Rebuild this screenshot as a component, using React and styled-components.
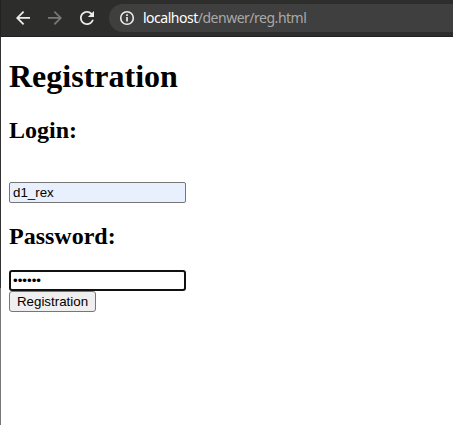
import React from "react";
import styled, { createGlobalStyle } from "styled-components";

const GlobalStyle = createGlobalStyle`
  * { box-sizing: border-box; }
  html, body { margin: 0; height: 100%; overflow: hidden; background: #fff; }
`;

const Window = styled.div`
  display: flex;
  flex-direction: column;
  width: 453px;
  height: 425px;
  overflow: hidden;
`;

const Toolbar = styled.header`
  display: flex;
  align-items: center;
  flex: none;
  height: 37px;
  padding-left: 15px;
  background: #2d2d2b;
  border-bottom: 1px solid #202124;
  border-left: 1px solid #222;
`;

const NavButton = styled.button`
  display: flex;
  width: 16px;
  height: 16px;
  margin-right: 16px;
  padding: 0;
  border: 0;
  background: none;
  color: ${(p) => (p.disabled ? "#797978" : "#efede7")};
`;

const AddressBar = styled.div`
  display: flex;
  align-items: center;
  flex: 1;
  height: 28px;
  margin-left: -3px;
  padding-left: 10px;
  border-radius: 14px 0 0 14px;
  background: #3f3f3f;
  color: #efede7;
`;

const Url = styled.span`
  margin-left: 8px;
  font: 14px/20px "Noto Sans", "Open Sans", sans-serif;
  letter-spacing: -0.49px;
  color: #aaa9a7;
  white-space: nowrap;
`;

const Host = styled.span`
  color: #fff;
`;

const Page = styled.main`
  flex: 1;
  padding-left: 8px;
  border-left: 1px solid;
  border-image: linear-gradient(#333 251px, #777 251px) 1;
  font-family: "Liberation Serif", "Times New Roman", serif;
  color: #000;
`;

const Title = styled.h1`
  margin: 21px 0 0;
  font-size: 32px;
  line-height: 37px;
`;

const Label = styled.h2`
  margin: ${(p) => p.$top}px 0 ${(p) => p.$bottom}px;
  font-size: 24px;
  line-height: 27px;
`;

const Field = styled.input`
  display: block;
  width: 177px;
  height: 21px;
  margin: 0;
  padding: 1px 3px;
  border: 1px solid #767676;
  border-radius: 2px;
  outline: none;
  background: ${(p) => (p.$filled ? "#e8f0fe" : "#fff")};
  color: #000;
  font: 13.333px "Liberation Sans", Arial, sans-serif;
`;

const FocusedField = styled(Field)`
  padding: 1px 2px;
  border: 2px solid #101010;
  border-radius: 3px;
`;

const Submit = styled.button`
  display: block;
  width: 87px;
  height: 21px;
  padding: 0;
  border: 1px solid #767676;
  border-radius: 3px;
  background: #efefef;
  color: #000;
  font: 13.333px "Liberation Sans", Arial, sans-serif;
`;

const NavIcon = ({ d }) => (
  <svg width="16" height="16" viewBox="4 2.86 18.29 18.29" fill="currentColor">
    <path d={d} />
  </svg>
);

const InfoIcon = () => (
  <svg width="16" height="16" viewBox="0 0 16 16" fill="none" stroke="currentColor">
    <circle cx="8" cy="8" r="6.3" strokeWidth="1.6" />
    <path d="M8 7v4.5M8 4.3V6" strokeWidth="1.7" />
  </svg>
);

const ICONS = {
  back: "M20 11H7.83l5.59-5.59L12 4l-8 8 8 8 1.41-1.41L7.83 13H20v-2z",
  forward: "M12 4l-1.41 1.41L16.17 11H4v2h12.17l-5.58 5.59L12 20l8-8z",
  reload:
    "M17.65 6.35C16.2 4.9 14.21 4 12 4c-4.42 0-7.99 3.58-7.99 8s3.57 8 7.99 8c3.73 0 6.84-2.55 7.73-6h-2.08c-.82 2.33-3.04 4-5.65 4-3.31 0-6-2.69-6-6s2.69-6 6-6c1.66 0 3.14.69 4.22 1.78L13 11h7V4l-2.35 2.35z",
};

export default function App() {
  return (
    <Window>
      <GlobalStyle />
      <Toolbar>
        <NavButton aria-label="Back">
          <NavIcon d={ICONS.back} />
        </NavButton>
        <NavButton aria-label="Forward" disabled>
          <NavIcon d={ICONS.forward} />
        </NavButton>
        <NavButton aria-label="Reload">
          <NavIcon d={ICONS.reload} />
        </NavButton>
        <AddressBar>
          <InfoIcon />
          <Url>
            <Host>localhost</Host>/denwer/reg.html
          </Url>
        </AddressBar>
      </Toolbar>
      <Page>
        <Title>Registration</Title>
        <Label $top={22} $bottom={38}>Login:</Label>
        <Field $filled defaultValue="d1_rex" aria-label="Login" />
        <Label $top={20} $bottom={20}>Password:</Label>
        <FocusedField type="password" defaultValue="123456" aria-label="Password" />
        <Submit>Registration</Submit>
      </Page>
    </Window>
  );
}
